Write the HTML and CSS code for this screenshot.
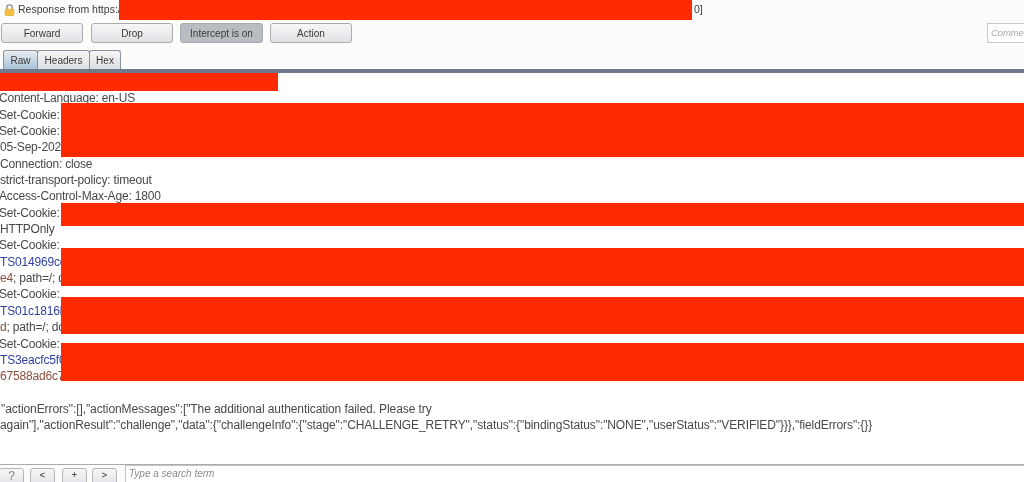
FILE: index.html
```html
<!DOCTYPE html>
<html lang="en">
<head>
<meta charset="utf-8">
<title>Response from https</title>
<link rel="stylesheet" href="styles.css">
</head>
<body>
<div class="app">
  <header class="titlebar">
    <svg class="lock" width="11" height="12" viewBox="0 0 11 13" aria-hidden="true">
      <path d="M2.6 6V3.9a2.9 2.9 0 0 1 5.8 0V6" fill="none" stroke="#8d8f88" stroke-width="1.4"/>
      <rect x="0.7" y="5.6" width="9.6" height="7" rx="1" fill="#f3c13c" stroke="#d6a52c" stroke-width="0.6"/>
    </svg>
    <span class="title">Response from https:/</span>
    <span class="title-end">0]</span>
    <div class="redact redact-title"></div>
  </header>
  <div class="toolbar">
    <button class="btn btn-first">Forward</button>
    <button class="btn">Drop</button>
    <button class="btn btn-on">Intercept is on</button>
    <button class="btn">Action</button>
    <div class="comment">Comme</div>
  </div>
  <nav class="tabs">
    <span class="tab tab-active">Raw</span>
    <span class="tab tab-headers">Headers</span>
    <span class="tab tab-hex">Hex</span>
  </nav>
  <main class="editor">
    <div class="line"></div>
    <div class="line indent">Content-Language: en-US</div>
    <div class="line indent">Set-Cookie:</div>
    <div class="line indent">Set-Cookie:</div>
    <div class="line">05-Sep-2023</div>
    <div class="line">Connection: close</div>
    <div class="line">strict-transport-policy: timeout</div>
    <div class="line indent">Access-Control-Max-Age: 1800</div>
    <div class="line indent">Set-Cookie:</div>
    <div class="line">HTTPOnly</div>
    <div class="line indent">Set-Cookie:</div>
    <div class="line"><span class="name">TS014969ce</span></div>
    <div class="line"><span class="value">e4</span>; path=/; d</div>
    <div class="line indent">Set-Cookie:</div>
    <div class="line"><span class="name">TS01c1816b</span></div>
    <div class="line"><span class="value">d</span>; path=/; do</div>
    <div class="line indent">Set-Cookie:</div>
    <div class="line"><span class="name">TS3eacfc5f0</span></div>
    <div class="line"><span class="value">67588ad6c7</span></div>
    <div class="line"></div>
    <div class="line json json-first">"actionErrors":[],"actionMessages":["The additional authentication failed. Please try</div>
    <div class="line json">again"],"actionResult":"challenge","data":{"challengeInfo":{"stage":"CHALLENGE_RETRY","status":{"bindingStatus":"NONE","userStatus":"VERIFIED"}}},"fieldErrors":{}}</div>
    <div class="redact r1"></div>
    <div class="redact r2"></div>
    <div class="redact r3"></div>
    <div class="redact r4"></div>
    <div class="redact r5"></div>
    <div class="redact r6"></div>
  </main>
  <footer class="searchbar">
    <button class="mini mini-help">?</button>
    <button class="mini">&lt;</button>
    <button class="mini mini-plus">+</button>
    <button class="mini">&gt;</button>
    <div class="search">Type a search term</div>
  </footer>
</div>
</body>
</html>
```

FILE: styles.css
```css
* { box-sizing: border-box; }
html, body { margin: 0; height: 482px; overflow: hidden; background: #fcfcfa; }
body { font-family: "Liberation Sans", Arial, sans-serif; color: #3a3a3a; }
.app { display: flex; flex-direction: column; height: 482px; width: 1024px; overflow: hidden; filter: blur(0.4px); }
.redact { position: absolute; background: #ff2a00; }

.titlebar { position: relative; height: 23px; display: flex; align-items: flex-start; padding: 2px 0 0 4px; font-size: 10.5px; line-height: 14px; flex: none; }
.lock { flex: none; margin: 2px 3px 0 0; }
.title { width: 676px; white-space: nowrap; flex: none; }
.title-end { flex: none; }
.redact-title { left: 119px; top: 0; width: 573px; height: 20px; }

.toolbar { height: 20px; display: flex; gap: 7px; padding-left: 1px; flex: none; }
.btn { width: 82px; height: 20px; padding: 0; border: 1px solid #a9acaf; border-radius: 3px; background: linear-gradient(#f6f7f8, #dfe1e4); font: 10px "Liberation Sans", Arial, sans-serif; color: #3a3a3a; }
.btn-first { margin-right: 1px; }
.btn-on { background: #b9bcc0; border-color: #a6a9ad; width: 83px; }
.comment { margin-left: auto; width: 37px; height: 20px; border: 1px solid #c9c9c9; border-right: 0; padding: 0 0 0 3px; font: italic 9.4px/18px "Liberation Sans", Arial, sans-serif; color: #a9a9a9; white-space: nowrap; background: #fff; }

.tabs { display: flex; align-items: flex-end; height: 30px; padding: 8px 0 0 3px; border-bottom: 4px solid #6f7b8c; flex: none; }
.tab { display: block; height: 19px; border: 1px solid #8d939b; border-bottom: 0; border-radius: 3px 3px 0 0; background: linear-gradient(#f5f6f7, #dcdfe2); font-size: 10px; line-height: 19px; text-align: center; color: #3a3a3a; }
.tab-active { width: 35px; background: linear-gradient(#e9edf1, #a9c2d8); }
.tab-headers { width: 53px; margin-left: -1px; }
.tab-hex { width: 32px; margin-left: -1px; }

.editor { position: relative; height: 391px; background: #fff; font-size: 12px; letter-spacing: -0.18px; line-height: 16.35px; color: #484848; white-space: nowrap; overflow: hidden; flex: none; padding-top: 1px; }
.line { height: 16.35px; }
.indent { margin-left: -1px; }
.json { letter-spacing: -0.09px; }
.json-first { margin-left: 1px; }
.name { color: #2f3f9f; }
.value { color: #8a4d3c; }
.r1 { left: 0; top: 0; width: 278px; height: 18px; }
.r2 { left: 61px; top: 30px; right: 0; height: 54px; }
.r3 { left: 61px; top: 130px; right: 0; height: 23px; }
.r4 { left: 61px; top: 175px; right: 0; height: 38px; }
.r5 { left: 61px; top: 224px; right: 0; height: 37px; }
.r6 { left: 61px; top: 270px; right: 0; height: 38px; }

.searchbar { flex: 1; display: flex; gap: 6px; align-items: flex-start; padding: 3px 0 0 0; border-top: 1px solid #ababab; background: #fcfcfa; }
.mini { width: 25px; height: 18px; padding: 0 0 5px; border: 1px solid #b4b6b9; border-radius: 3px; background: linear-gradient(#f6f7f8, #e1e3e6); font: bold 9px "Liberation Sans", Arial, sans-serif; color: #555; flex: none; }
.mini-help { margin-left: -1px; font: 12px "Liberation Sans", Arial, sans-serif; color: #888; }
.mini-plus { margin: 0 -1px 0 1px; }
.search { margin: -3px 0 0 2px; flex: 1; border: 1px solid #c4c4c4; border-right: 0; border-bottom: 0; height: 20px; padding: 1px 0 0 3px; background: #fff; font: italic 10px/14px "Liberation Sans", Arial, sans-serif; color: #8a8a8a; }
```
